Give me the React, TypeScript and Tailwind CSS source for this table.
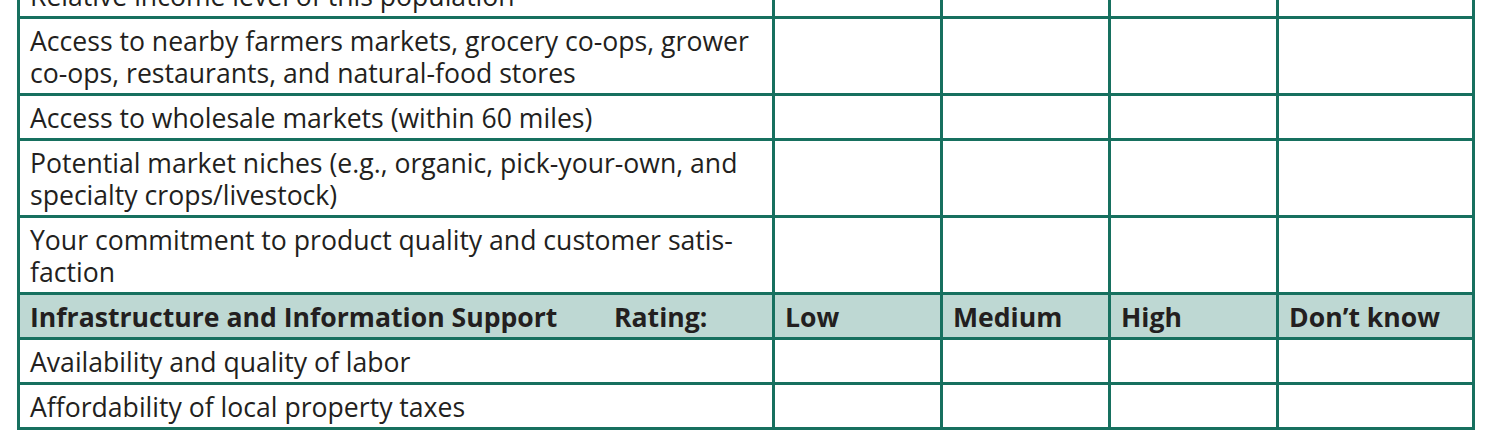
import React from "react";

const rows: React.ReactNode[] = [
  "Relative income level of this population",
  <>
    Access to nearby farmers markets, grocery co-ops, grower
    <br />
    co-ops, restaurants, and natural-food stores
  </>,
  "Access to wholesale markets (within 60 miles)",
  <>
    Potential market niches (e.g., organic, pick-your-own, and
    <br />
    specialty crops/livestock)
  </>,
  <>
    Your commitment to product quality and customer satis-
    <br />
    faction
  </>,
];

const infraRows = [
  "Availability and quality of labor",
  "Affordability of local property taxes",
];

const cell = "border-[3px] border-[#17705f] px-[10px] pt-[6px] pb-[4px] align-top whitespace-nowrap";

const BlankCells = () => (
  <>
    <td className={cell} />
    <td className={cell} />
    <td className={cell} />
    <td className={cell} />
  </>
);

export default function App() {
  return (
    <div
      className="w-[1500px] h-[430px] overflow-hidden bg-white text-[#231f20]"
      style={{ fontFamily: '"Open Sans", "Liberation Sans", sans-serif' }}
    >
      <table className="ml-[17px] mt-[-29px] w-[1455px] table-fixed border-collapse text-[26.6px] leading-[32px]">
        <colgroup>
          <col className="w-[755px]" />
          <col className="w-[168px]" />
          <col className="w-[168px]" />
          <col className="w-[168px]" />
          <col className="w-[196px]" />
        </colgroup>
        <tbody>
          {rows.map((r, i) => (
            <tr key={i}>
              <td className={cell}>{r}</td>
              <BlankCells />
            </tr>
          ))}
          <tr className="bg-[#bed8d3] font-bold">
            <td className={cell}>
              <div className="flex">
                <span className="w-[584px]">Infrastructure and Information Support</span>
                <span>Rating:</span>
              </div>
            </td>
            <td className={cell}>Low</td>
            <td className={cell}>Medium</td>
            <td className={cell}>High</td>
            <td className={cell}>Don’t know</td>
          </tr>
          {infraRows.map((r) => (
            <tr key={r}>
              <td className={cell}>{r}</td>
              <BlankCells />
            </tr>
          ))}
        </tbody>
      </table>
    </div>
  );
}
